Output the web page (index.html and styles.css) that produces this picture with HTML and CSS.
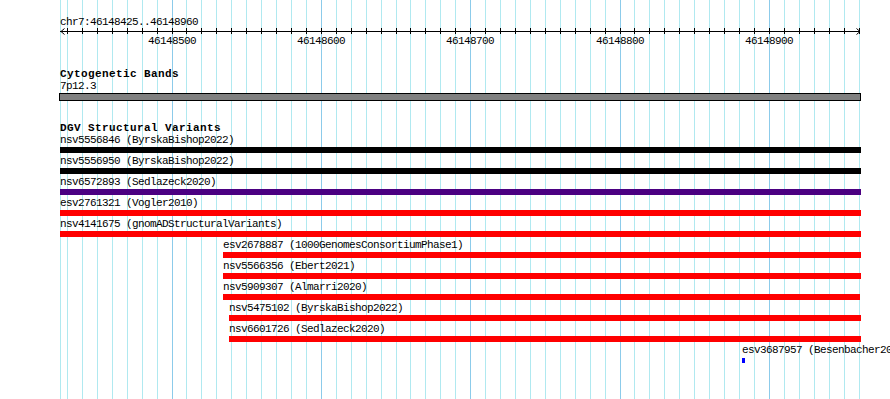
FILE: index.html
```html
<!DOCTYPE html>
<html lang="en">
<head>
    <meta charset="UTF-8">
    <title>chr7:46148425..46148960</title>
    <link rel="stylesheet" href="styles.css">
</head>
<body>

<div class="view">
    <!-- vertical grid, filled in by the script below -->
    <div class="grid" id="grid"></div>

    <div class="tracks">
        <!-- ruler -->
        <div class="ruler">
            <div class="location">chr7:46148425..46148960</div>
            <svg class="axis" id="axis" width="890" height="7">
                <line x1="60" y1="3.5" x2="860" y2="3.5" />
                <polyline points="64.5,0.5 61,3.5 64.5,6.5" />
                <polyline points="856.5,0.5 860,3.5 856.5,6.5" />
            </svg>
            <div class="tick-labels" id="tick-labels"></div>
        </div>

        <!-- cytogenetic bands -->
        <div class="track">
            <div class="track-title">Cytogenetic Bands</div>
            <div class="band-name">7p12.3</div>
            <div class="band"></div>
        </div>

        <!-- DGV -->
        <div class="track track-dgv">
            <div class="track-title">DGV Structural Variants</div>

            <div class="feature" style="margin-left:0;width:801px">
                <div class="feature-label">nsv5556846 (ByrskaBishop2022)</div>
                <div class="feature-bar bar-loss"></div>
            </div>
            <div class="feature" style="margin-left:0;width:801px">
                <div class="feature-label">nsv5556950 (ByrskaBishop2022)</div>
                <div class="feature-bar bar-loss"></div>
            </div>
            <div class="feature" style="margin-left:0;width:801px">
                <div class="feature-label">nsv6572893 (Sedlazeck2020)</div>
                <div class="feature-bar bar-complex"></div>
            </div>
            <div class="feature" style="margin-left:0;width:801px">
                <div class="feature-label">esv2761321 (Vogler2010)</div>
                <div class="feature-bar"></div>
            </div>
            <div class="feature" style="margin-left:0;width:801px">
                <div class="feature-label">nsv4141675 (gnomADStructuralVariants)</div>
                <div class="feature-bar"></div>
            </div>
            <div class="feature" style="margin-left:163px;width:638px">
                <div class="feature-label">esv2678887 (1000GenomesConsortiumPhase1)</div>
                <div class="feature-bar"></div>
            </div>
            <div class="feature" style="margin-left:163px;width:638px">
                <div class="feature-label">nsv5566356 (Ebert2021)</div>
                <div class="feature-bar"></div>
            </div>
            <div class="feature" style="margin-left:163px;width:637px">
                <div class="feature-label">nsv5909307 (Almarri2020)</div>
                <div class="feature-bar"></div>
            </div>
            <div class="feature" style="margin-left:169px;width:632px">
                <div class="feature-label">nsv5475102 (ByrskaBishop2022)</div>
                <div class="feature-bar"></div>
            </div>
            <div class="feature" style="margin-left:169px;width:632px">
                <div class="feature-label">nsv6601726 (Sedlazeck2020)</div>
                <div class="feature-bar"></div>
            </div>
            <div class="feature" style="margin-left:682px;width:3px">
                <div class="feature-label">esv3687957 (Besenbacher2016)</div>
                <div class="feature-bar bar-gain"></div>
            </div>
        </div>
    </div>
</div>

<script>
    // view: 46148425..46148960 drawn between x=60 and x=860
    const start = 46148425;
    const scale = 1.4935;
    const left = 60;

    function toX(bp) {
        return Math.floor(left + (bp - start) * scale + 0.001);
    }

    const grid = document.getElementById('grid');
    const axis = document.getElementById('axis');
    const labels = document.getElementById('tick-labels');
    const svgNS = 'http://www.w3.org/2000/svg';

    // line at the left edge of the view
    const edge = document.createElement('div');
    edge.className = 'grid-line';
    edge.style.left = left + 'px';
    grid.appendChild(edge);

    for (let bp = 46148430; bp <= 46148960; bp += 10) {
        const x = toX(bp);
        const major = bp % 100 === 0;

        const line = document.createElement('div');
        line.className = major ? 'grid-line major' : 'grid-line';
        line.style.left = x + 'px';
        grid.appendChild(line);

        const tick = document.createElementNS(svgNS, 'line');
        tick.setAttribute('x1', x + 0.5);
        tick.setAttribute('x2', x + 0.5);
        tick.setAttribute('y1', 0);
        tick.setAttribute('y2', 6);
        axis.appendChild(tick);

        if (major) {
            const label = document.createElement('span');
            label.className = 'tick-label';
            label.textContent = bp;
            label.style.left = (x - 24) + 'px';
            labels.appendChild(label);
        }
    }
</script>

</body>
</html>
```

FILE: styles.css
```css
/* general */
body {
    margin: 0;
    background-color: white;
    font-family: "Liberation Mono", "DejaVu Sans Mono", monospace;
    font-size: 11px;
    letter-spacing: -0.6px;
    line-height: 12px;
    color: black;
    overflow: hidden;
}

.view {
    position: relative;
    width: 890px;
    height: 399px;
    overflow: hidden;
}

/* grid */
.grid {
    position: absolute;
    top: 0;
    left: 0;
    width: 100%;
    height: 100%;
}

.grid-line {
    position: absolute;
    top: 0;
    width: 1px;
    height: 100%;
    background-color: #b0e9f0;
}

.grid-line.major {
    background-color: #8ccbea;
}

.tracks {
    position: relative;
    padding-top: 16px;
}

/* ruler */
.location {
    padding-left: 60px;
    white-space: nowrap;
}

.axis {
    display: block;
    shape-rendering: crispEdges;
}

.axis line,
.axis polyline {
    stroke: black;
    stroke-width: 1;
    fill: none;
}

.axis polyline {
    shape-rendering: auto;
}

.tick-labels {
    position: relative;
    height: 12px;
}

.tick-label {
    position: absolute;
    top: 0;
    white-space: nowrap;
}

/* tracks */
.track {
    padding-left: 60px;
    margin-top: 21px;
}

.track-dgv {
    margin-top: 21px;
}

.track-title {
    font-weight: bold;
    letter-spacing: 0.4px;
    white-space: nowrap;
}

.band {
    margin: 1px 0 0 -1px;
    width: 800px;
    height: 6px;
    background-color: #808080;
    border: 1px solid black;
}

/* features */
.feature {
    padding-bottom: 2px;
}

.feature-label {
    white-space: nowrap;
}

.feature-bar {
    margin-top: 1px;
    height: 6px;
    background-color: red;
}

.bar-loss {
    background-color: black;
}

.bar-complex {
    background-color: #4b0082;
}

.bar-gain {
    background-color: blue;
    height: 5px;
    margin-top: 2px;
}
```
